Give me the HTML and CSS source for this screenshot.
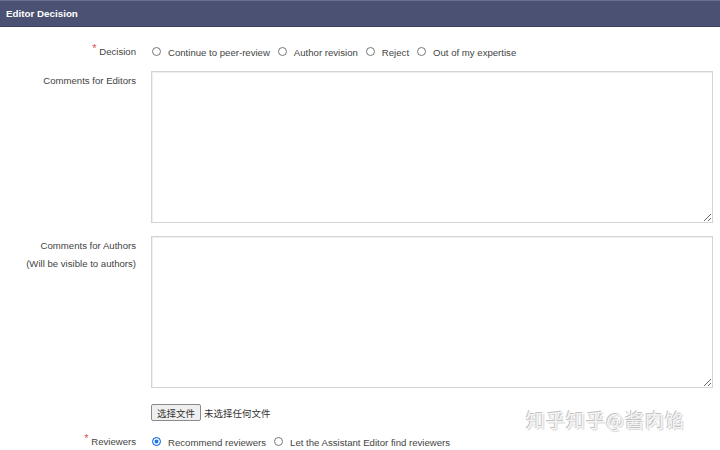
FILE: index.html
```html
<!DOCTYPE html>
<html lang="zh">
<head>
<meta charset="utf-8">
<title>Editor Decision</title>
<link rel="stylesheet" href="styles.css">
</head>
<body>
<div class="header">Editor Decision</div>
<div class="form">
  <div class="row row-decision">
    <div class="label"><span class="req">*</span> Decision</div>
    <div class="field options">
      <label class="opt"><span class="radio"></span>Continue to peer-review</label>
      <label class="opt"><span class="radio"></span>Author revision</label>
      <label class="opt"><span class="radio"></span>Reject</label>
      <label class="opt"><span class="radio"></span>Out of my expertise</label>
    </div>
  </div>
  <div class="row row-editors">
    <div class="label text-label">Comments for Editors</div>
    <div class="field"><textarea class="area"></textarea></div>
  </div>
  <div class="row row-authors">
    <div class="label text-label">Comments for Authors<br>(Will be visible to authors)</div>
    <div class="field"><textarea class="area"></textarea></div>
  </div>
  <div class="row row-file">
    <div class="label"></div>
    <div class="field file">
      <span class="file-btn">选择文件</span><span class="file-none">未选择任何文件</span>
    </div>
  </div>
  <div class="row row-reviewers">
    <div class="label"><span class="req">*</span> Reviewers</div>
    <div class="field options">
      <label class="opt"><span class="radio checked"></span>Recommend reviewers</label>
      <label class="opt"><span class="radio"></span>Let the Assistant Editor find reviewers</label>
    </div>
  </div>
</div>
<div class="watermark">知乎知乎@酱肉馅</div>
</body>
</html>
```
FILE: styles.css
```css
html, body {
  margin: 0;
  padding: 0;
  background: #ffffff;
  overflow: hidden;
}
body {
  width: 720px;
  height: 450px;
  font-family: "Liberation Sans", Arial, sans-serif;
  font-size: 9.6px;
  color: #444;
  position: relative;
}
.header {
  height: 25px;
  line-height: 25px;
  background: #4b5172;
  border-top: 1px solid #6b7090;
  border-bottom: 1px solid #3d4260;
  color: #ffffff;
  font-weight: bold;
  font-size: 9.8px;
  padding-left: 6px;
}
.form {
  display: flex;
  flex-direction: column;
  padding: 17px 7px 0 0;
}
.row {
  display: grid;
  grid-template-columns: 136px 1fr;
  column-gap: 15px;
}
.row-editors { margin-top: 11px; }
.row-authors { margin-top: 13px; }
.row-file { margin-top: 16px; }
.row-reviewers { margin-top: 13px; }
.label {
  text-align: right;
  line-height: 18px;
  color: #444;
}
.text-label { padding-top: 1px; }
.row-decision .label,
.row-reviewers .label {
  line-height: 16px;
  height: 16px;
}
.req {
  color: #d9534f;
  font-size: 11px;
  line-height: 0;
  position: relative;
  top: -3px;
}
.options {
  display: flex;
  align-items: center;
  height: 16px;
  gap: 7px;
}
.opt {
  display: flex;
  align-items: center;
  white-space: nowrap;
}
.radio {
  width: 7px;
  height: 7px;
  border: 1px solid #777;
  border-radius: 50%;
  margin-left: 1px;
  margin-right: 7px;
  background: #fff;
  position: relative;
  top: -1px;
}
.radio.checked {
  border-color: #1a73e8;
  box-shadow: inset 0 0 0 1.5px #fff;
  background-color: #1a73e8;
}
.area {
  display: block;
  width: 100%;
  height: 152px;
  box-sizing: border-box;
  border: 1px solid #d4d4d4;
  box-shadow: inset 1px 1px 1px #eeeeee;
  border-radius: 0;
  resize: both;
  margin: 0;
  background: #fff;
}
.file {
  display: flex;
  align-items: center;
  height: 17px;
  font-family: "Noto Sans CJK SC", "Liberation Sans", sans-serif;
  font-size: 9.5px;
  color: #333;
}
.file-btn {
  display: flex;
  align-items: center;
  justify-content: center;
  width: 48px;
  height: 15px;
  border: 1px solid #8a8a8a;
  border-radius: 2px;
  background: #efefef;
  margin-right: 3px;
}
.watermark {
  position: absolute;
  left: 526px;
  top: 406px;
  font-family: "Noto Sans CJK SC", sans-serif;
  font-size: 19px;
  letter-spacing: 1px;
  color: #f4f4f4;
  text-shadow: -1px -1px 0 #c4c4c4, 1px 1px 0 #dcdcdc;
  white-space: nowrap;
}
```
